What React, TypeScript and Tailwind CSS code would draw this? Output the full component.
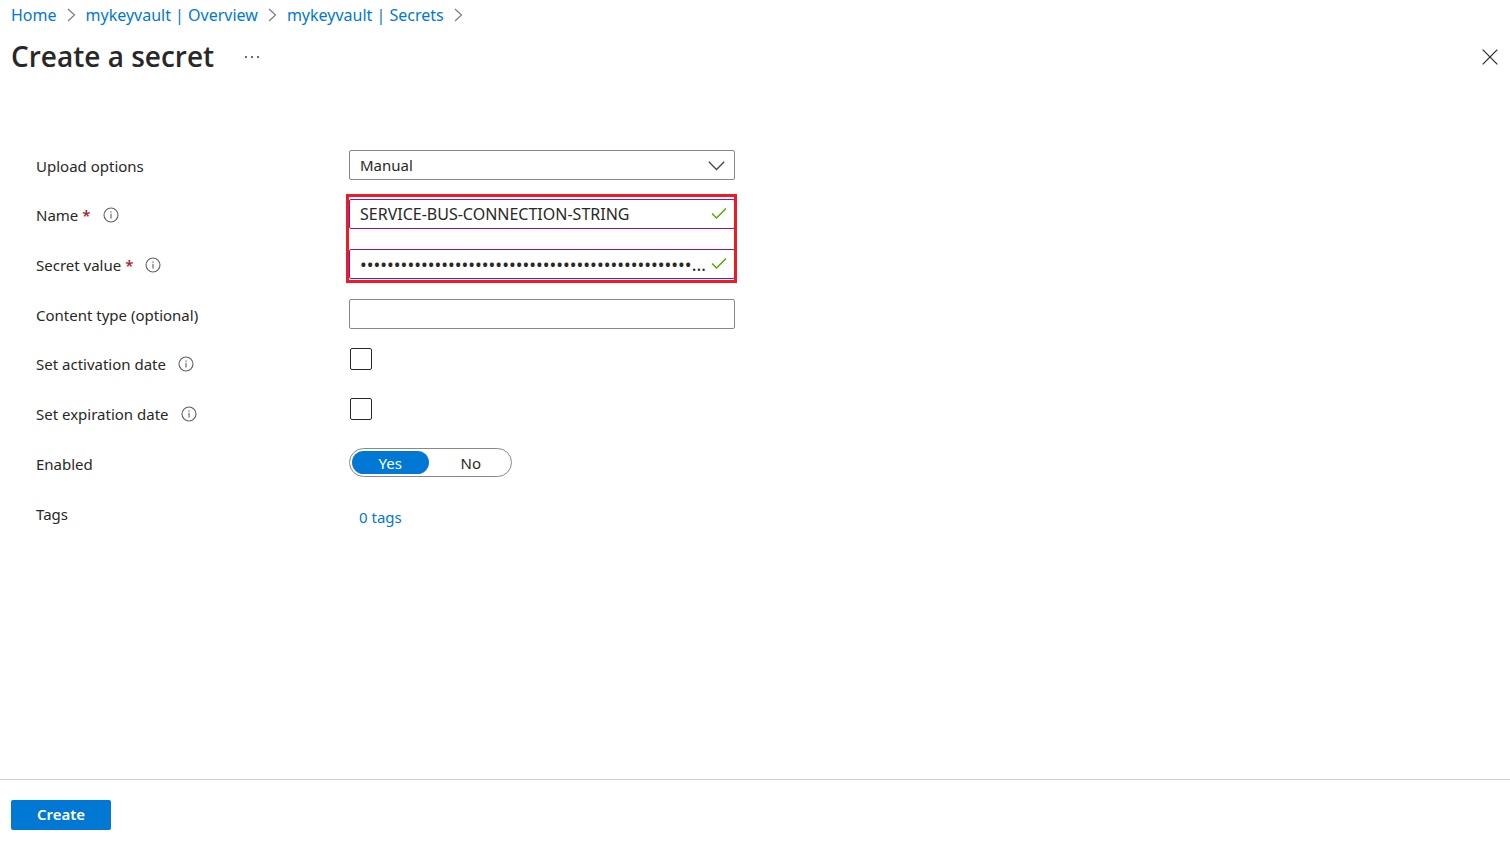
import React, { useState } from "react";

const crumbs = ["Home", "mykeyvault | Overview", "mykeyvault | Secrets"];

const fieldClass =
  "block h-[30px] w-full rounded-xs border bg-white pl-2.5 leading-5 text-[#292827] outline-none";

function CrumbArrow() {
  return (
    <svg width="9" height="14" viewBox="0 0 9 14" fill="none" stroke="#7a7877" strokeWidth="1.1" aria-hidden="true">
      <path d="M1 1 L7.5 7 L1 13" />
    </svg>
  );
}

function InfoIcon() {
  return (
    <svg width="16" height="16" viewBox="0 0 16 16" fill="none" aria-hidden="true">
      <circle cx="8" cy="8" r="7" stroke="#605e5c" strokeWidth="1.1" />
      <path d="M8 6.8 V11.4" stroke="#605e5c" strokeWidth="1.1" />
      <circle cx="8" cy="5" r="0.7" fill="#605e5c" />
    </svg>
  );
}

function CheckIcon() {
  return (
    <svg
      className="pointer-events-none absolute top-2 right-2"
      width="16"
      height="13"
      viewBox="0 0 16 13"
      fill="none"
      stroke="#57a300"
      strokeWidth="1.4"
      aria-hidden="true"
    >
      <path d="M1 6.5 L5.5 11 L15 1.5" />
    </svg>
  );
}

type RowProps = {
  label: string;
  htmlFor: string;
  required?: boolean;
  info?: boolean;
  children: React.ReactNode;
};

function Row({ label, htmlFor, required, info, children }: RowProps) {
  return (
    <div className="grid grid-cols-[313px_minmax(0,386px)]">
      <div className="flex h-8 items-center">
        <label htmlFor={htmlFor} id={htmlFor + "-label"} className="text-[15px] leading-5">
          {label}
          {required && <span className="ml-1 font-semibold text-[#a4262c]">*</span>}
        </label>
        {info && (
          <button type="button" aria-label={"About " + label} className="ml-3">
            <InfoIcon />
          </button>
        )}
      </div>
      <div className="-mb-0.5">{children}</div>
    </div>
  );
}

export default function App() {
  const [name, setName] = useState("SERVICE-BUS-CONNECTION-STRING");
  const [secret, setSecret] = useState("x".repeat(90));
  const [contentType, setContentType] = useState("");

  return (
    <div className="flex min-h-screen flex-col bg-white font-['Noto_Sans','Open_Sans',sans-serif] text-[#292827]">
      <nav aria-label="Breadcrumb" className="flex h-[30px] items-center gap-2.5 pl-[11px] text-base leading-6">
        {crumbs.map((crumb) => (
          <React.Fragment key={crumb}>
            <a href="#" className="text-[#0078d4]">
              {crumb}
            </a>
            <CrumbArrow />
          </React.Fragment>
        ))}
      </nav>

      <header className="flex h-[54px] items-center pr-3 pl-[11px]">
        <h1 className="pb-0.5 font-['Open_Sans','Noto_Sans',sans-serif] text-[28px] leading-9 font-semibold">
          Create a secret
        </h1>
        <button type="button" aria-label="More actions" className="ml-[30px]">
          <svg width="16" height="4" viewBox="0 0 16 4" fill="#292827" aria-hidden="true">
            <circle cx="2" cy="2" r="0.9" />
            <circle cx="8" cy="2" r="0.9" />
            <circle cx="14" cy="2" r="0.9" />
          </svg>
        </button>
        <button type="button" aria-label="Close" className="ml-auto">
          <svg width="16" height="16" viewBox="0 0 16 16" fill="none" stroke="#292827" strokeWidth="1.2" aria-hidden="true">
            <path d="M0.7 0.7 L15.3 15.3 M15.3 0.7 L0.7 15.3" />
          </svg>
        </button>
      </header>

      <form className="flex flex-1 flex-col" onSubmit={(e) => e.preventDefault()}>
        <div className="flex flex-1 flex-col gap-[17px] px-9 pt-[66px]">
          <Row label="Upload options" htmlFor="upload">
            <div className="relative">
              <select id="upload" className={fieldClass + " appearance-none border-[#8a8886] text-[15px]"}>
                <option>Manual</option>
              </select>
              <svg
                className="pointer-events-none absolute top-[11px] right-2.5"
                width="17"
                height="10"
                viewBox="0 0 17 10"
                fill="none"
                stroke="#484644"
                strokeWidth="1.3"
                aria-hidden="true"
              >
                <path d="M0.8 0.8 L8.5 8.5 L16.2 0.8" />
              </svg>
            </div>
          </Row>

          <div className="flex flex-col gap-[18px]">
            <div className="relative flex flex-col gap-[18px]">
              <Row label="Name" htmlFor="name" required info>
                <div className="relative">
                  <input
                    id="name"
                    type="text"
                    value={name}
                    onChange={(e) => setName(e.target.value)}
                    className={fieldClass + " border-[#881798] pr-[26px] text-base leading-5"}
                  />
                  <CheckIcon />
                </div>
              </Row>
              <Row label="Secret value" htmlFor="secret" required info>
                <div className="relative">
                  <input
                    id="secret"
                    type="password"
                    value={secret}
                    onChange={(e) => setSecret(e.target.value)}
                    className={fieldClass + " border-[#881798] pr-[26px] text-lg leading-5 text-ellipsis"}
                  />
                  <CheckIcon />
                </div>
              </Row>
              <div className="pointer-events-none absolute -top-[5px] -bottom-0.5 left-[310px] w-[391px] border-3 border-[#ed1c24]" />
            </div>
            <Row label="Content type (optional)" htmlFor="content-type">
              <input
                id="content-type"
                type="text"
                value={contentType}
                onChange={(e) => setContentType(e.target.value)}
                className={fieldClass + " border-[#8a8886] text-[15px]"}
              />
            </Row>
          </div>

          <div className="flex flex-col gap-[18px]">
            <Row label="Set activation date" htmlFor="activation" info>
              <input
                id="activation"
                type="checkbox"
                className="ml-px block size-[22px] appearance-none rounded-xs border border-[#292827] checked:bg-[#0078d4]"
              />
            </Row>
            <Row label="Set expiration date" htmlFor="expiration" info>
              <input
                id="expiration"
                type="checkbox"
                className="ml-px block size-[22px] appearance-none rounded-xs border border-[#292827] checked:bg-[#0078d4]"
              />
            </Row>
            <Row label="Enabled" htmlFor="enabled-yes">
              <div
                role="radiogroup"
                aria-labelledby="enabled-yes-label"
                className="grid h-[29px] w-[163px] grid-cols-2 gap-1 rounded-full border border-[#8a8886] p-0.5 text-[15px] leading-5"
              >
                {["Yes", "No"].map((option) => (
                  <label
                    key={option}
                    className="flex items-center justify-center rounded-full has-checked:bg-[#0078d4] has-checked:text-white"
                  >
                    <input
                      id={"enabled-" + option.toLowerCase()}
                      type="radio"
                      name="enabled"
                      value={option}
                      defaultChecked={option === "Yes"}
                      className="sr-only"
                    />
                    {option}
                  </label>
                ))}
              </div>
            </Row>
            <Row label="Tags" htmlFor="tags">
              <a id="tags" href="#" className="inline-block pt-[9px] pl-2.5 text-[15px] leading-5 text-[#0078d4]">
                0 tags
              </a>
            </Row>
          </div>
        </div>

        <footer className="flex h-[63px] border-t border-[#d2d0ce] pt-5 pl-[11px]">
          <button
            type="submit"
            className="h-[30px] w-[100px] rounded-xs bg-[#0078d4] pb-0.5 text-[15px] leading-5 font-semibold text-white"
          >
            Create
          </button>
        </footer>
      </form>
    </div>
  );
}
